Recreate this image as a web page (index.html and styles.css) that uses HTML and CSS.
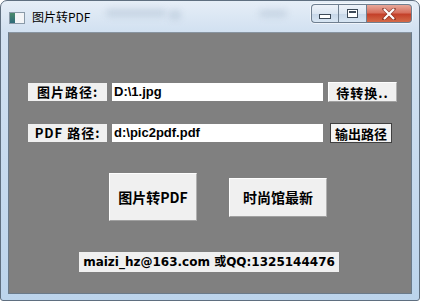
FILE: index.html
```html
<!DOCTYPE html>
<html>
<head>
<meta charset="utf-8">
<link rel="stylesheet" href="styles.css">
</head>
<body>
<div class="window">
  <div class="titlebar">
    <div class="appicon"><span class="icl"></span><span class="icr"></span></div>
    <div class="title">图片转PDF</div>
    <div class="blur b1"></div>
    <div class="blur b2"></div>
    <div class="blur b3"></div>
    <div class="controls">
      <div class="cbtn min"><span class="minbar"></span></div>
      <div class="cbtn max"><span class="maxbox"></span></div>
      <div class="cbtn close">
        <svg width="14" height="12" viewBox="0 0 14 12"><path d="M2 1 L12 11 M12 1 L2 11" stroke="#5a1a10" stroke-width="3.6" stroke-linecap="square" opacity=".5"/><path d="M2 1 L12 11 M12 1 L2 11" stroke="#fff" stroke-width="2.2" fill="none"/></svg>
      </div>
    </div>
  </div>
  <div class="client">
    <div class="row r1">
      <div class="label">图片路径:</div>
      <div class="field">D:\1.jpg</div>
      <div class="btn small b-wait">待转换..</div>
    </div>
    <div class="row r2">
      <div class="label">PDF 路径:</div>
      <div class="field">d:\pic2pdf.pdf</div>
      <div class="btn small b-out">输出路径</div>
    </div>
    <div class="bigrow">
      <div class="btn big b1b">图片转PDF</div>
      <div class="btn big b2b">时尚馆最新</div>
    </div>
    <div class="email">maizi_hz@163.com 或QQ:1325144476</div>
  </div>
</div>
</body>
</html>
```
FILE: styles.css
```css
html, body { margin: 0; padding: 0; width: 422px; height: 303px; overflow: hidden; background: #ffffff; }
body { font-family: "Noto Sans CJK SC", "DejaVu Sans", sans-serif; }
.window {
  width: 420px; height: 301px;
  box-sizing: border-box;
  border: 1px solid #5f6f80;
  border-radius: 7px 7px 3px 3px;
  background: linear-gradient(180deg, #e6eef7 0px, #d2e1f1 30px, #bcd4ec 100%);
  display: flex; flex-direction: column;
  overflow: hidden;
  position: relative;
}
.titlebar {
  height: 31px; flex: none;
  display: flex; align-items: flex-start;
  position: relative;
}
.appicon { width: 14px; height: 10px; margin: 11px 0 0 8px; display: flex; border: 1px solid #8a9aa8; background: #e8eef2; }
.icl { width: 5px; height: 10px; background: linear-gradient(180deg,#4a8a6a,#2e6a7a); }
.icr { flex: 1; background: #f3f5f7; }
.title { margin: 8px 0 0 7px; font-size: 12px; line-height: 16px; color: #000; font-family: "Noto Sans CJK SC", sans-serif; }
.blur { position: absolute; background: #b4c4d6; filter: blur(3px); opacity: .55; border-radius: 4px; }
.blur.b1 { left: 105px; top: 8px; width: 60px; height: 8px; }
.blur.b2 { left: 168px; top: 9px; width: 12px; height: 10px; }
.blur.b3 { left: 258px; top: 9px; width: 28px; height: 7px; }
.controls { position: absolute; right: 7px; top: 3px; display: flex; border-radius: 4px; box-shadow: 0 0 0 1px rgba(255,255,255,.6); }
.cbtn { height: 19px; box-sizing: border-box; border: 1px solid #6f7f90; display: flex; align-items: center; justify-content: center; }
.min { width: 27px; border-radius: 4px 0 0 4px; background: linear-gradient(180deg,#eef3f9 0%,#dbe6f2 50%,#c6d6e8 51%,#d8e6f3 100%); border-right: none; }
.max { width: 29px; background: linear-gradient(180deg,#eef3f9 0%,#dbe6f2 50%,#c6d6e8 51%,#d8e6f3 100%); }
.close { width: 45px; border-radius: 0 4px 4px 0; border-left: none; background: linear-gradient(180deg,#e8a89a 0%,#d7705e 45%,#c4412a 55%,#d46a48 100%); }
.minbar { width: 10px; height: 3px; background: #fff; border: 1px solid #3d4a58; margin-top: 6px; }
.maxbox { width: 9px; height: 7px; border: 1px solid #3d4a58; box-shadow: inset 0 0 0 1px #fff, inset 0 2px 0 1px #3d4a58; background: #fff; }
.client {
  flex: 1;
  margin: 0 7px 6px 7px;
  background: #808080;
  border: 1px solid #6a7a8a;
  border-top-color: #8894a0;
  display: flex; flex-direction: column;
  padding-left: 19px;
}
.row { display: flex; align-items: center; height: 20px; }
.r1 { margin-top: 49px; }
.r2 { margin-top: 21px; }
.label {
  width: 79px; height: 18px; box-sizing: border-box;
  background: #f0f0f0; color: #000;
  font-weight: bold; font-size: 13px; line-height: 18px;
  text-align: center; letter-spacing: 1px;
}
.field {
  width: 211px; height: 18px; margin-left: 5px; box-sizing: border-box;
  background: #fff; color: #000; padding-left: 2px;
  font-family: "Liberation Sans", sans-serif; font-weight: bold; font-size: 13px; line-height: 18px;
}
.btn {
  background: #f0f0f0; color: #000; box-sizing: border-box;
  border: 1px solid #fdfdfd; border-right-color: #b0b0b0; border-bottom-color: #a0a0a0;
  font-weight: bold; display: flex; align-items: center; justify-content: center;
}
.small { font-size: 13px; height: 20px; }
.b-wait { width: 69px; margin-left: 5px; letter-spacing: 1px; }
.b-out { width: 62px; margin-left: 7px; border-color: #404040; background: #f4f4f4; }
.bigrow { display: flex; align-items: center; margin-top: 30px; margin-left: 81px; gap: 32px; }
.big { font-size: 14px; }
.b1b { width: 88px; height: 48px; }
.b2b { width: 98px; height: 39px; }
.email {
  align-self: flex-start;
  margin: 31px 0 0 51px;
  width: 260px; height: 20px;
  background: #f0f0f0; color: #000;
  font-family: "DejaVu Sans", "Noto Sans CJK SC", sans-serif;
  font-weight: bold; font-size: 12px; line-height: 20px; text-align: center;
}
```
